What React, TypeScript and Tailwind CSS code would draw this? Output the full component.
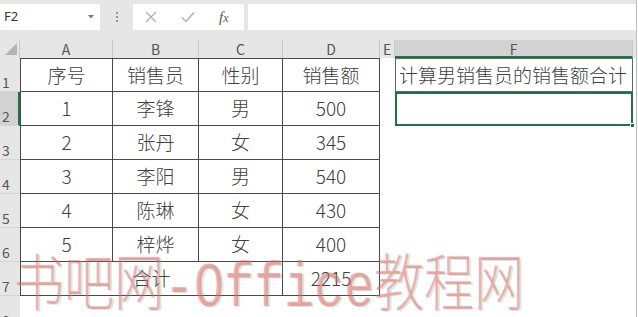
import React from "react";

const FONT = '"Noto Sans CJK SC", "Noto Sans", sans-serif';

const rows: string[][] = [
  ["序号", "销售员", "性别", "销售额"],
  ["1", "李锋", "男", "500"],
  ["2", "张丹", "女", "345"],
  ["3", "李阳", "男", "540"],
  ["4", "陈琳", "女", "430"],
  ["5", "梓烨", "女", "400"],
];

function RowHeader({ n, active }: { n: number; active?: boolean }) {
  return (
    <div
      className={
        "w-[20px] shrink-0 flex items-end pl-[2px] text-[14px] leading-[18px] text-[#555] border-b border-[#d4d4d4] " +
        (active ? "bg-[#d2d2d2] border-r-2 border-r-[#217346]" : "bg-[#e6e6e6]")
      }
    >
      {n}
    </div>
  );
}

export default function App() {
  return (
    <div
      className="w-[638px] h-[317px] overflow-hidden bg-white relative flex"
      style={{ fontFamily: FONT }}
    >
      <div className="w-[636px] shrink-0 flex flex-col">
        {/* formula bar */}
        <div className="h-[40px] shrink-0 bg-[#e6e6e6] flex items-start pt-[4px]">
          <div className="w-[100px] h-[26px] bg-white flex items-center justify-between pl-[4px] pr-[6px]">
            <span className="text-[13px] text-[#333]" style={{ fontFamily: '"Noto Sans", sans-serif' }}>F2</span>
            <svg width="6" height="4" viewBox="0 0 6 4">
              <path d="M0 0 L6 0 L3 3.5 Z" fill="#777" />
            </svg>
          </div>
          <div className="w-[33px] h-[26px] flex flex-col items-center justify-center gap-[2px]">
            <div className="w-[2px] h-[2px] bg-[#9a9a9a]" />
            <div className="w-[2px] h-[2px] bg-[#9a9a9a]" />
            <div className="w-[2px] h-[2px] bg-[#9a9a9a]" />
          </div>
          <div className="w-[111px] h-[26px] bg-white flex items-center">
            <svg className="ml-[12px]" width="12" height="12" viewBox="0 0 12 12">
              <path d="M1 1 L11 11 M11 1 L1 11" stroke="#b0b0b0" strokeWidth="1.3" fill="none" />
            </svg>
            <svg className="ml-[24px]" width="14" height="12" viewBox="0 0 14 12">
              <path d="M1 6.5 L5 10.5 L13 1.5" stroke="#b0b0b0" strokeWidth="1.5" fill="none" />
            </svg>
            <span
              className="ml-[24px] text-[15px] italic text-[#555]"
              style={{ fontFamily: '"Liberation Serif", serif' }}
            >
              f<span className="text-[12px]">x</span>
            </span>
          </div>
          <div className="ml-[4px] w-[388px] h-[26px] bg-white" />
        </div>

        {/* column header row */}
        <div className="h-[18px] shrink-0 flex bg-[#e6e6e6] text-[14px] leading-[18px] text-[#555]">
          <div className="w-[20px] relative border-r border-[#c8c8c8]">
            <svg className="absolute left-[5px] top-[3px]" width="12" height="12" viewBox="0 0 12 12">
              <path d="M12 0 L12 12 L0 12 Z" fill="#b4b4b4" />
            </svg>
          </div>
          <div className="w-[93px] text-center border-r border-[#c8c8c8]">A</div>
          <div className="w-[86px] text-center border-r border-[#c8c8c8]">B</div>
          <div className="w-[84px] text-center border-r border-[#c8c8c8]">C</div>
          <div className="w-[97px] text-center border-r border-[#c8c8c8]">D</div>
          <div className="w-[15px] text-center border-r border-[#c8c8c8]">E</div>
          <div className="w-[238px] text-center bg-[#d2d2d2] border-b-2 border-[#217346] border-r border-r-[#c8c8c8]">F</div>
          <div className="flex-1" />
        </div>

        {/* data rows */}
        {rows.map((r, i) => (
          <div key={i} className="h-[34px] shrink-0 flex">
            <RowHeader n={i + 1} active={i === 1} />
            {r.map((c, j) => (
              <div
                key={j}
                className={
                  "flex items-center justify-center text-[19px] font-light text-[#404040] border-r border-b border-[#4a4a4a] " +
                  (i === 0 ? "border-t " : "") +
                  (j === 0 ? "w-[93px] border-l " : j === 1 ? "w-[86px] " : j === 2 ? "w-[84px] " : "w-[97px] ")
                }
              >
                {c}
              </div>
            ))}
            <div className="w-[15px]" />
            {i === 0 ? (
              <div className="w-[238px] border border-[#5a6b60] flex items-center pl-[3px] text-[19px] font-light text-[#404040] whitespace-nowrap overflow-hidden">
                计算男销售员的销售额合计
              </div>
            ) : i === 1 ? (
              <div className="w-[238px] border-2 border-[#217346] relative">
                <div className="absolute right-[-4px] bottom-[-4px] w-[5px] h-[5px] bg-[#217346] border border-white" />
              </div>
            ) : (
              <div className="w-[238px]" />
            )}
            <div className="flex-1" />
          </div>
        ))}

        {/* row 7 */}
        <div className="h-[34px] shrink-0 flex">
          <RowHeader n={7} />
          <div className="w-[263px] flex items-center justify-center text-[19px] font-light text-[#404040] border-l border-r border-b border-[#4a4a4a]">
            合计
          </div>
          <div className="w-[97px] flex items-center justify-center text-[19px] font-light text-[#404040] border-r border-b border-[#4a4a4a]">
            2215
          </div>
          <div className="flex-1" />
        </div>

        {/* row 8 */}
        <div className="h-[34px] shrink-0 flex">
          <RowHeader n={8} />
          <div className="flex-1" />
        </div>
      </div>
      <div className="w-[1px] shrink-0 bg-[#bdbdbd]" />
      <div className="flex-1 bg-white" />

      {/* watermark */}
      <div
        className="absolute left-[14px] top-[247px] text-[50px] leading-none whitespace-nowrap pointer-events-none text-[rgba(235,95,95,0.5)] scale-y-125 origin-top"
        style={{ textShadow: "2px 1px 0 rgba(90,170,130,0.25)" }}
      >
        <span className="font-extralight" style={{ fontFamily: '"Noto Sans CJK SC", sans-serif' }}>书吧网</span>
        <span style={{ fontFamily: '"Liberation Mono", monospace' }}>-Office</span>
        <span className="font-extralight" style={{ fontFamily: '"Noto Sans CJK SC", sans-serif' }}>教程网</span>
      </div>
    </div>
  );
}
